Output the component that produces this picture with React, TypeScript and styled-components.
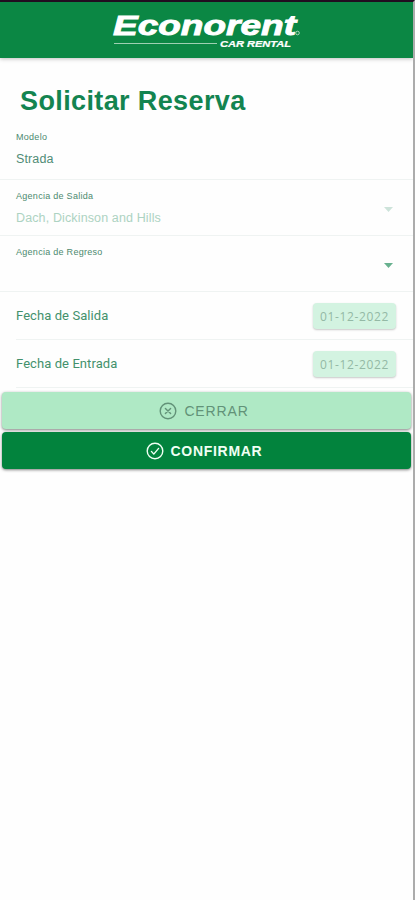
import React from "react";
import styled, { createGlobalStyle } from "styled-components";

const GlobalStyle = createGlobalStyle`
  * { box-sizing: border-box; }
  body { margin: 0; background: #fff; font-family: Roboto, sans-serif; }
`;

const Screen = styled.div`
  height: 900px;
  border-top: 2px solid #210d20;
  border-right: 2px solid #acacac;
  background: #fefefe;
  overflow: hidden;
`;

const Header = styled.header`
  height: 56px;
  background: #0b8744;
  box-shadow: 0 1px 4px rgba(0, 0, 0, 0.25);
  display: flex;
  justify-content: center;
`;

const Title = styled.h1`
  margin: 0;
  height: 63px;
  padding: 26px 0 0 20px;
  font: bold 27px/34px "Liberation Sans", sans-serif;
  letter-spacing: 0.38px;
  color: #138450;
`;

const Field = styled.section<{ $height: number }>`
  height: ${(p) => p.$height}px;
  padding: 0 20px 0 16px;
  border-bottom: 1px solid #eff3f2;
  display: grid;
  grid-template-columns: 1fr auto;
  grid-template-rows: 21px 1fr;
`;

const Label = styled.label`
  grid-column: 1 / -1;
  padding-top: 11px;
  font: 9px/11px "Liberation Sans", sans-serif;
  letter-spacing: 0.28px;
  color: #4d8a6f;
`;

const Value = styled.span<{ $muted?: boolean }>`
  padding-top: 8px;
  font: 12.5px/18px "Liberation Sans", sans-serif;
  letter-spacing: 0.13px;
  color: ${(p) => (p.$muted ? "#add3c2" : "#508c76")};
`;

const Caret = styled.span<{ $muted?: boolean }>`
  width: 9px;
  height: 5px;
  margin-top: 6px;
  background: ${(p) => (p.$muted ? "#cde3da" : "#68b18f")};
  clip-path: polygon(0 0, 100% 0, 50% 100%);
`;

const DateRow = styled.div`
  height: 48px;
  margin-left: 16px;
  padding: 0 17px 0 0;
  border-bottom: 1px solid #eff3f2;
  display: flex;
  align-items: center;
  justify-content: space-between;
`;

const DateLabel = styled.span`
  font: 13px/18px Roboto, sans-serif;
  letter-spacing: 0.08px;
  color: #43916c;
`;

const DateButton = styled.button`
  width: 83px;
  height: 26px;
  margin-top: 1px;
  padding: 1px 0 0;
  border: 0;
  border-radius: 4px;
  background: #d3f3e1;
  box-shadow: 0 1px 2px rgba(0, 0, 0, 0.22);
  color: #94b9a5;
  font: 12px/25px "Open Sans", sans-serif;
  letter-spacing: 0.65px;
`;

const Actions = styled.footer`
  padding: 4px 2px 0;
  display: grid;
  gap: 3px;
`;

const ActionButton = styled.button<{ $primary?: boolean }>`
  height: 37px;
  padding: 0 5px 0 0;
  border: 0;
  border-radius: 4px;
  background: ${(p) => (p.$primary ? "#02833d" : "#afe9c5")};
  box-shadow: 0 1px 3px rgba(0, 0, 0, 0.5);
  color: ${(p) => (p.$primary ? "#f0fff4" : "#629278")};
  font: ${(p) => (p.$primary ? 700 : 400)} 14px/36px "Liberation Sans", sans-serif;
  letter-spacing: ${(p) => (p.$primary ? 0.7 : 0.85)}px;
  display: flex;
  align-items: center;
  justify-content: center;
  gap: 7px;
`;

const Logo = () => (
  <svg width="190" height="50" viewBox="0 0 190 50" aria-label="Econorent Car Rental">
    <g fill="#fff" fontFamily="Liberation Sans, sans-serif" fontWeight="bold" fontStyle="italic">
      <text x="1" y="32.9" fontSize="28.5" textLength="183" lengthAdjust="spacingAndGlyphs" stroke="#fff" strokeWidth=".9">Econorent</text>
      <text x="108" y="44.8" fontSize="8.2" textLength="71" lengthAdjust="spacingAndGlyphs" stroke="#fff" strokeWidth=".2">CAR RENTAL</text>
    </g>
    <path d="M2 41.5H105" stroke="#9ed0b2" />
    <circle cx="185.5" cy="31" r="1.8" fill="none" stroke="#b4dcc3" strokeWidth=".9" />
  </svg>
);

const CircleIcon = ({ d }: { d: string }) => (
  <svg width="18" height="18" viewBox="0 0 18 18" fill="none" stroke="currentColor" strokeWidth="1.4" strokeLinecap="round" strokeLinejoin="round">
    <circle cx="9" cy="9" r="7.8" />
    <path d={d} />
  </svg>
);

const dates = [
  { label: "Fecha de Salida", value: "01-12-2022" },
  { label: "Fecha de Entrada", value: "01-12-2022" },
];

export default function App() {
  return (
    <>
      <GlobalStyle />
      <Screen>
        <Header><Logo /></Header>
        <main>
          <Title>Solicitar Reserva</Title>
          <Field $height={59}>
            <Label>Modelo</Label>
            <Value>Strada</Value>
          </Field>
          <Field $height={56}>
            <Label>Agencia de Salida</Label>
            <Value $muted>Dach, Dickinson and Hills</Value>
            <Caret $muted />
          </Field>
          <Field $height={56}>
            <Label>Agencia de Regreso</Label>
            <Value />
            <Caret />
          </Field>
          {dates.map((date) => (
            <DateRow key={date.label}>
              <DateLabel>{date.label}</DateLabel>
              <DateButton>{date.value}</DateButton>
            </DateRow>
          ))}
        </main>
        <Actions>
          <ActionButton>
            <CircleIcon d="M6.4 6.4l5.2 5.2M11.6 6.4l-5.2 5.2" />
            CERRAR
          </ActionButton>
          <ActionButton $primary>
            <CircleIcon d="M5.4 9.4l2.4 2.7 4.8-5.7" />
            CONFIRMAR
          </ActionButton>
        </Actions>
      </Screen>
    </>
  );
}
